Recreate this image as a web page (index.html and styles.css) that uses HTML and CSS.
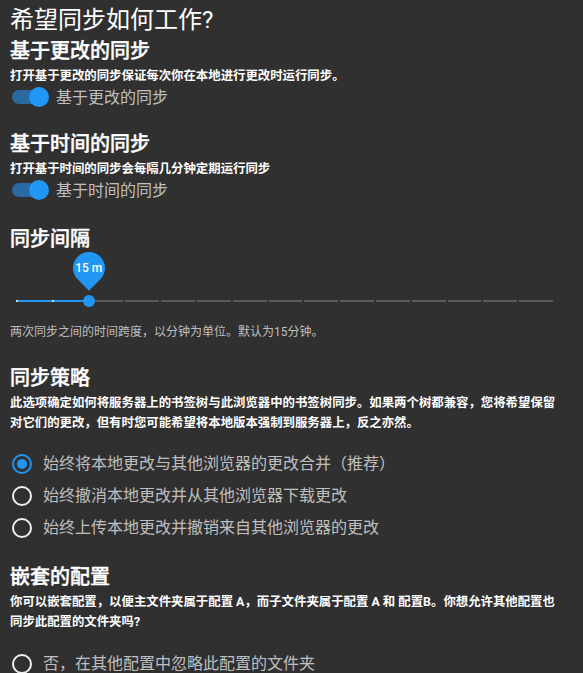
FILE: index.html
```html
<!DOCTYPE html>
<html lang="zh">
<head>
<meta charset="utf-8">
<title>同步设置</title>
<link rel="stylesheet" href="styles.css">
</head>
<body>
<main class="page">
  <h1 class="title">希望同步如何工作?</h1>

  <section class="section s1">
    <h2 class="heading">基于更改的同步</h2>
    <p class="desc">打开基于更改的同步保证每次你在本地进行更改时运行同步。</p>
    <label class="switch-row">
      <span class="switch"><span class="switch-track"></span><span class="switch-thumb"></span></span>
      <span class="switch-label">基于更改的同步</span>
    </label>
  </section>

  <section class="section s2">
    <h2 class="heading">基于时间的同步</h2>
    <p class="desc">打开基于时间的同步会每隔几分钟定期运行同步</p>
    <label class="switch-row">
      <span class="switch"><span class="switch-track"></span><span class="switch-thumb"></span></span>
      <span class="switch-label">基于时间的同步</span>
    </label>
  </section>

  <section class="section s3">
    <h2 class="heading">同步间隔</h2>
    <div class="slider">
      <div class="track">
        <span class="seg on"></span><span class="seg on"></span>
        <span class="seg"></span><span class="seg"></span><span class="seg"></span>
        <span class="seg"></span><span class="seg"></span><span class="seg"></span>
        <span class="seg"></span><span class="seg"></span><span class="seg"></span>
        <span class="seg"></span><span class="seg"></span><span class="seg"></span>
        <span class="seg"></span>
      </div>
      <span class="thumb"></span>
      <span class="pin"><span class="pin-text">15 m</span></span>
    </div>
    <p class="hint">两次同步之间的时间跨度，以分钟为单位。默认为15分钟。</p>
  </section>

  <section class="section s4">
    <h2 class="heading">同步策略</h2>
    <p class="desc">此选项确定如何将服务器上的书签树与此浏览器中的书签树同步。如果两个树都兼容，您将希望保留对它们的更改，但有时您可能希望将本地版本强制到服务器上，反之亦然。</p>
    <div class="radios">
      <label class="radio-row"><span class="radio checked"></span><span class="radio-label">始终将本地更改与其他浏览器的更改合并（推荐）</span></label>
      <label class="radio-row"><span class="radio"></span><span class="radio-label">始终撤消本地更改并从其他浏览器下载更改</span></label>
      <label class="radio-row"><span class="radio"></span><span class="radio-label">始终上传本地更改并撤销来自其他浏览器的更改</span></label>
    </div>
  </section>

  <section class="section s5">
    <h2 class="heading">嵌套的配置</h2>
    <p class="desc">你可以嵌套配置，以便主文件夹属于配置 A，而子文件夹属于配置 A 和 配置B。你想允许其他配置也同步此配置的文件夹吗?</p>
    <div class="radios radios-nested">
      <label class="radio-row"><span class="radio"></span><span class="radio-label">否，在其他配置中忽略此配置的文件夹</span></label>
    </div>
  </section>
</main>
</body>
</html>
```

FILE: styles.css
```css
* { box-sizing: border-box; }

html, body {
  margin: 0;
  padding: 0;
  background: #303030;
  overflow: hidden;
}

body {
  font-family: Roboto, "Noto Sans CJK SC", sans-serif;
  color: #ffffff;
}

.page {
  padding: 4px 22px 0 10px;
}

.title {
  margin: 0;
  font-size: 24px;
  line-height: 32px;
  font-weight: 400;
  color: #ffffff;
}

.section { display: block; }
.s1 { margin-top: 1px; }
.s2 { margin-top: 22px; }
.s3 { margin-top: 24px; }
.s4 { margin-top: 22px; }
.s5 { margin-top: 19px; }

.heading {
  margin: 0;
  font-size: 20px;
  line-height: 28px;
  font-weight: 500;
  color: #ffffff;
  -webkit-text-stroke: 0.4px #ffffff;
}

.desc {
  margin: 1px 0 0;
  font-size: 12.4px;
  line-height: 20px;
  font-weight: 700;
  color: #ffffff;
}

/* switch */
.switch-row {
  display: flex;
  align-items: center;
  height: 22px;
}

.switch {
  position: relative;
  width: 38px;
  height: 20px;
  margin-left: 2px;
  flex: none;
}

.switch-track {
  position: absolute;
  left: 0;
  top: 3px;
  width: 32px;
  height: 14px;
  border-radius: 7px;
  background: #2a6aa2;
}

.switch-thumb {
  position: absolute;
  left: 17px;
  top: 0;
  width: 20px;
  height: 20px;
  border-radius: 50%;
  background: #2196f3;
}

.switch-label {
  margin-left: 6px;
  padding-top: 2px;
  font-size: 16px;
  line-height: 22px;
  color: rgba(255, 255, 255, 0.7);
}

/* slider */
.slider {
  position: relative;
  margin: 0 8px 0 6px;
  padding: 47px 0 5px;
}

.track {
  display: flex;
  gap: 2px;
  height: 2px;
  padding-left: 2px;
  background: linear-gradient(to right, #d8d8d8 0, #d8d8d8 74px, transparent 74px);
}

.seg {
  flex: 1;
  height: 2px;
  background: #595959;
}

.seg.on { background: #2196f3; }

.thumb {
  position: absolute;
  left: 67px;
  top: 42px;
  width: 12px;
  height: 12px;
  border-radius: 50%;
  background: #2196f3;
}

.pin {
  position: absolute;
  left: 57px;
  top: -1px;
  width: 32px;
  height: 32px;
  border-radius: 50% 50% 0 50%;
  background: #2196f3;
  transform: rotate(45deg);
  display: flex;
  align-items: center;
  justify-content: center;
}

.pin-text {
  transform: rotate(-45deg);
  font-size: 12px;
  font-weight: 500;
  color: #ffffff;
  white-space: nowrap;
}

.hint {
  margin: 15px 0 0;
  font-size: 12px;
  line-height: 20px;
  color: rgba(255, 255, 255, 0.7);
}

/* radios */
.radios { margin-top: 15px; }
.radios-nested { margin-top: 16px; }

.radio-row {
  display: flex;
  align-items: center;
  height: 32px;
}

.radio {
  flex: none;
  width: 20px;
  height: 20px;
  margin-left: 2px;
  border: 2px solid #f0f0f0;
  border-radius: 50%;
  display: flex;
  align-items: center;
  justify-content: center;
}

.radio.checked { border-color: #2196f3; }

.radio.checked::after {
  content: "";
  width: 10px;
  height: 10px;
  border-radius: 50%;
  background: #2196f3;
}

.radio-label {
  margin-left: 11px;
  font-size: 16px;
  line-height: 22px;
  color: rgba(255, 255, 255, 0.7);
  white-space: nowrap;
}
```
